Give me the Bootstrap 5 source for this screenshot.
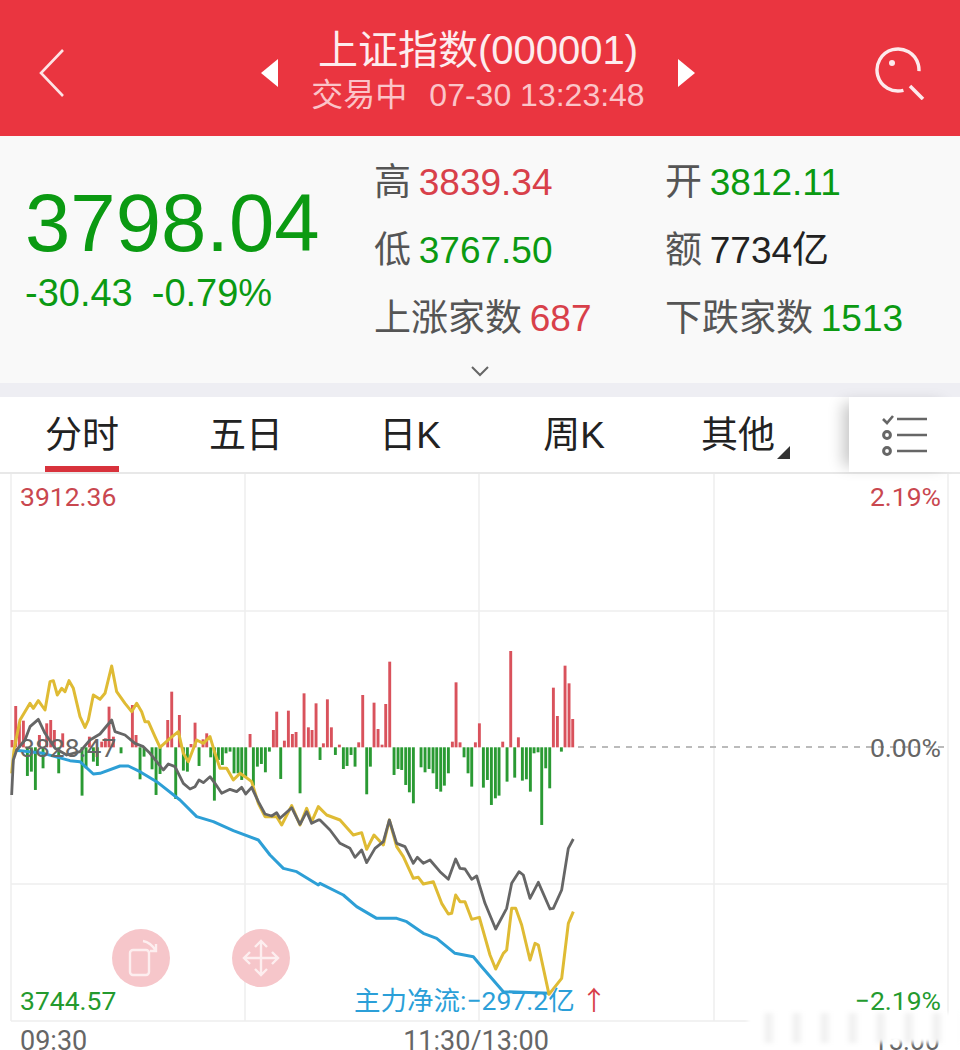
<!DOCTYPE html>
<html lang="zh-CN">
<head>
    <meta charset="UTF-8">
    <meta name="viewport" content="width=device-width, initial-scale=1.0">
    <title>上证指数</title>
    <link href="https://cdn.jsdelivr.net/npm/bootstrap@5.3.0/dist/css/bootstrap.min.css" rel="stylesheet">
    <style>
        body {
            width: 960px;
            height: 1050px;
            overflow: hidden;
            background: #fff;
            font-family: "Liberation Sans", "Noto Sans CJK SC", sans-serif;
        }
        .top-bar {
            height: 136px;
            background: #ea3540;
            color: #fff;
            padding: 0 34px 0 38px;
        }
        .top-icon { margin-top: 10px; }
        .top-title { font-size: 40px; line-height: 48px; margin-top: 6px; color: #fdecee; white-space: nowrap; }
        .top-sub { font-size: 32px; line-height: 42px; color: #fbc4c8; white-space: nowrap; }
        .top-sub span { margin-left: 22px; }
        .tri-left, .tri-right { width: 0; height: 0; margin-top: 10px; border-top: 14px solid transparent; border-bottom: 14px solid transparent; }
        .tri-left { border-right: 17px solid #fff; }
        .tri-right { border-left: 17px solid #fff; }
        .top-mid { gap: 33px; margin-left: 16px; }
        .quote-panel {
            height: 247px;
            background: #f9f9f9;
            position: relative;
        }
        .quote-left { width: 374px; padding: 44px 0 0 25px; }
        .price-big { font-size: 81.5px; line-height: 86px; color: #0b9a12; }
        .price-chg { font-size: 38px; line-height: 46px; color: #0b9a12; margin-top: 4px; white-space: nowrap; }
        .price-chg span { margin-left: 19px; }
        .stat-col { width: 291px; padding-top: 13px; }
        .stat-row { height: 68px; font-size: 37px; line-height: 68px; color: #555; white-space: nowrap; word-spacing: -2.5px; }
        .val-up { color: #d8404a; }
        .val-down { color: #0b9a12; }
        .val-plain { color: #222; }
        .more-arrow { position: absolute; left: 470px; top: 229px; }
        .gap-strip { height: 14px; background: #eeeef3; }
        .tab-row { height: 77px; border-bottom: 2px solid #e8e8e8; }
        .tab-item {
            width: 164px;
            font-size: 37px;
            color: #222;
            text-align: center;
            line-height: 78px;
            position: relative;
        }
        .tab-item.on::after {
            content: "";
            position: absolute;
            left: 45px;
            bottom: 0;
            width: 74px;
            height: 6px;
            background: #d8323c;
        }
        .tab-corner {
            position: absolute;
            right: 30px;
            bottom: 13px;
            border-left: 13px solid transparent;
            border-bottom: 13px solid #333;
        }
        .tab-tool {
            width: 111px;
            margin-left: auto;
            box-shadow: -12px 0 14px -6px rgba(0, 0, 0, .22);
            background: #fff;
            position: relative;
        }
        .chart-box { height: 548px; position: relative; }
        .chart-box svg { display: block; }
        .chart-lbl { position: absolute; font-size: 26.5px; line-height: 30px; font-family: Roboto, "Noto Sans CJK SC", sans-serif; white-space: nowrap; }
        .lbl-up { color: #c9474f; }
        .lbl-down { color: #249a2e; }
        .lbl-gray { color: #666; }
        .lbl-flow { color: #2b9fd8; }
        .lbl-arrow { color: #d8404a; margin-left: 6px; }
        .axis-row {
            height: 29px;
            font-family: Roboto, sans-serif;
            font-size: 27px;
            line-height: 38px;
            color: #666;
            padding: 0 20px;
            position: relative;
        }
        .wm-blur {
            position: absolute;
            left: 748px;
            top: -9px;
            width: 212px;
            height: 30px;
            background: repeating-linear-gradient(90deg, #fff 0 14px, #eee 20px, #fff 28px);
            filter: blur(2px);
        }
    </style>
</head>
<body>
    <div class="top-bar d-flex align-items-center justify-content-between">
        <svg class="top-icon" width="28" height="50" viewBox="0 0 28 50"><path d="M25 2 3 25l22 23" fill="none" stroke="#fde3e5" stroke-width="2.6"/></svg>
        <div class="top-mid d-flex align-items-center">
            <div class="tri-left"></div>
            <div class="text-center">
                <div class="top-title">上证指数(000001)</div>
                <div class="top-sub">交易中<span>07-30 13:23:48</span></div>
            </div>
            <div class="tri-right"></div>
        </div>
        <svg class="top-icon" width="52" height="54" viewBox="0 0 52 54"><circle cx="24" cy="24" r="21" fill="none" stroke="#fdeaec" stroke-width="3.4" stroke-dasharray="105 27" transform="rotate(75 24 24)"/><path d="m36 40 13 13" stroke="#fdeaec" stroke-width="3.6"/><circle cx="18" cy="17" r="3" fill="#fdeaec"/></svg>
    </div>

    <div class="quote-panel d-flex">
        <div class="quote-left">
            <div class="price-big">3798.04</div>
            <div class="price-chg">-30.43<span>-0.79%</span></div>
        </div>
        <div class="stat-col">
            <div class="stat-row">高 <span class="val-up">3839.34</span></div>
            <div class="stat-row">低 <span class="val-down">3767.50</span></div>
            <div class="stat-row">上涨家数 <span class="val-up">687</span></div>
        </div>
        <div class="stat-col">
            <div class="stat-row">开 <span class="val-down">3812.11</span></div>
            <div class="stat-row">额 <span class="val-plain">7734亿</span></div>
            <div class="stat-row">下跌家数 <span class="val-down">1513</span></div>
        </div>
        <svg class="more-arrow" width="20" height="12" viewBox="0 0 20 12"><path d="m2 2 8 8 8-8" fill="none" stroke="#666" stroke-width="2"/></svg>
    </div>
    <div class="gap-strip"></div>

    <div class="tab-row d-flex">
        <div class="tab-item on">分时</div>
        <div class="tab-item">五日</div>
        <div class="tab-item">日K</div>
        <div class="tab-item">周K</div>
        <div class="tab-item">其他<i class="tab-corner"></i></div>
        <div class="tab-tool d-flex align-items-center justify-content-center">
            <svg width="46" height="42" viewBox="0 0 46 42" fill="none" stroke="#666" stroke-width="2.6"><path d="m1 5 4 4 6-7M15 5h30M15 21h30M15 37h30"/><circle cx="5" cy="21" r="3.4" stroke-width="3"/><circle cx="5" cy="37" r="3.4" stroke-width="3"/></svg>
        </div>
    </div>

    <div class="chart-box">
        <svg id="chart" width="960" height="548" viewBox="0 474 960 548">
            <g stroke="#eee" stroke-width="1.5" fill="none">
                <path d="M11 474v547M245 474v547M479 474v547M714 474v547M948 474v547M11 611h937M11 884h937M11 1021h937"/>
            </g>
            <path d="M578 747h370" stroke="#bbb" stroke-width="2" stroke-dasharray="6 6"/>
            <g id="bars"></g>
            <polyline id="lineBlue" fill="none" stroke="#2d9fd6" stroke-width="3" stroke-linejoin="round"/>
            <polyline id="lineYellow" fill="none" stroke="#dfbb34" stroke-width="3" stroke-linejoin="round"/>
            <polyline id="lineGray" fill="none" stroke="#666" stroke-width="2.8" stroke-linejoin="round"/>
            <circle cx="141" cy="958" r="29" fill="#f6c6ca"/>
            <circle cx="261" cy="958" r="29" fill="#f6c6ca"/>
            <g fill="none" stroke="#fdeeef" stroke-width="2.4">
                <rect x="130" y="950" width="19" height="25" rx="3"/>
                <path d="M143 941c6 1 10 5 13 10M156 944v7h-6"/>
                <path d="M261 942v32M245 958h32M255 947l6-6 6 6M255 969l6 6 6-6M250 952l-6 6 6 6M272 952l6 6-6 6"/>
            </g>
        </svg>
        <div class="chart-lbl lbl-up" style="left:20px;top:8px">3912.36</div>
        <div class="chart-lbl lbl-up" style="right:19px;top:8px">2.19%</div>
        <div class="chart-lbl lbl-gray" style="left:20px;top:259px">3828.47</div>
        <div class="chart-lbl lbl-gray" style="right:19px;top:259px">0.00%</div>
        <div class="chart-lbl lbl-down" style="left:20px;top:512px">3744.57</div>
        <div class="chart-lbl lbl-down" style="right:19px;top:512px">−2.19%</div>
        <div class="chart-lbl lbl-flow" style="left:354px;top:512px">主力净流:−297.2亿<span class="lbl-arrow">↑</span></div>
    </div>

    <div class="axis-row d-flex justify-content-between">
        <span>09:30</span>
        <span class="me-2">11:30/13:00</span>
        <span>15:00</span>
        <div class="wm-blur"></div>
    </div>

    <script src="https://cdn.jsdelivr.net/npm/bootstrap@5.3.0/dist/js/bootstrap.bundle.min.js"></script>
    <script>
        // bar tips read off the chart: [x, y] at 3x scale, 322 is the zero line
        const barsLeft = [[36,300],[47,198],[58,250],[70,242],[82,408],[94,395],[106,450],[118,285],[129,385],[140,250],[152,240],[163,270],[176,400],[188,280],[246,467],[258,385],[268,290],[280,365],[292,378],[305,305],[316,295],[327,200],[340,290],[363,340],[397,195],[408,285],[420,418],[432,350],[456,388],[468,465],[480,402],[503,240],[515,155],[527,477],[538,225],[550,392],[562,395],[573,312],[585,248],[597,378],[609,298],[620,280],[632,352],[643,482],[655,360],[667,375],[678,340],[690,335],[702,400],[714,400],[725,420],[737,410],[750,282],[760,437],[772,380],[784,372],[796,397],[808,335],[820,270],[830,215],[842,417],[853,302],[865,212],[877,282],[888,276],[900,460],[912,160],[925,262],[936,270],[948,190]];
        const barsRight = [[0,360],[10,310],[22,178],[34,262],[46,345],[58,314],[70,387],[81,378],[93,345],[105,380],[116,307],[128,165],[140,463],[151,380],[162,188],[174,267],[186,314],[197,192],[209,65],[222,405],[234,387],[245,390],[257,435],[268,457],[280,490],[303,382],[315,397],[327,387],[339,400],[350,447],[362,455],[373,437],[385,400],[397,305],[408,127],[420,307],[432,352],[444,400],[455,440],[466,307],[478,250],[490,443],[502,420],[514,495],[526,475],[537,467],[548,305],[561,425],[572,33],[584,413],[595,292],[607,422],[619,418],[631,455],[642,340],[654,337],[665,555],[677,385],[689,445],[700,143],[712,228],[724,335],[735,77],[747,130],[758,237]];

        let barHtml = '';
        function addBars(list, offset) {
            list.forEach(([x, y]) => {
                const up = y < 322;
                const h = Math.abs(322 - y) / 3;
                const top = up ? 640 + y / 3 : 747.3;
                barHtml += `<rect x="${offset + x / 3 - 1.4}" y="${top}" width="2.9" height="${h}" fill="${up ? '#d9525c' : '#2a9a33'}"/>`;
            });
        }
        addBars(barsLeft, 0);
        addBars(barsRight, 320);
        document.getElementById('bars').innerHTML = barHtml;

        // lines in two parts: left part from y 640, right part from x 320 y 800
        function toPoints(left, right) {
            const a = left.map(([x, y]) => `${x / 3},${640 + y / 3}`);
            const b = right.map(([x, y]) => `${320 + x / 3},${800 + y / 3}`);
            return a.concat(b).join(' ');
        }
        document.getElementById('lineYellow').setAttribute('points', toPoints(
            [[35,400],[42,330],[60,240],[90,190],[100,205],[115,182],[135,210],[150,125],[160,122],[172,165],[185,145],[195,155],[207,122],[220,145],[240,230],[255,262],[265,240],[280,165],[300,178],[315,160],[335,78],[350,155],[375,190],[395,215],[410,190],[425,215],[435,245],[445,245],[465,290],[480,322],[510,295],[535,275],[550,340],[565,365],[590,300],[610,310],[630,290],[645,340],[660,385],[680,385],[700,420],[720,400],[735,410],[755,425],[775,490],[795,530],[830,530],[845,555],[875,497],[900,555],[920,505],[935,545],[955,500]],
            [[0,25],[20,45],[60,60],[100,105],[125,98],[140,148],[162,105],[190,135],[208,60],[230,140],[250,170],[280,235],[295,232],[310,252],[340,245],[365,310],[385,342],[395,340],[407,285],[420,305],[435,305],[455,358],[478,352],[510,465],[527,507],[550,460],[560,450],[575,325],[587,325],[605,375],[630,480],[645,430],[655,435],[687,583],[725,535],[745,370],[760,335]]
        ));
        document.getElementById('lineGray').setAttribute('points', toPoints(
            [[35,465],[40,360],[50,330],[75,300],[90,260],[115,238],[135,280],[165,325],[200,345],[240,335],[270,300],[300,282],[335,240],[345,275],[375,285],[405,310],[430,320],[450,340],[470,365],[490,390],[505,372],[525,380],[550,430],[570,447],[585,440],[597,420],[610,428],[630,410],[645,430],[665,460],[690,448],[710,455],[725,442],[737,462],[755,442],[775,485],[795,522],[815,528],[830,518],[840,535],[875,503],[900,553],[920,515],[935,550],[955,540]],
            [[0,60],[30,90],[60,130],[90,145],[105,172],[125,150],[140,188],[165,145],[190,125],[208,60],[230,130],[255,140],[280,190],[292,172],[310,190],[330,180],[360,215],[385,238],[407,177],[420,205],[435,207],[455,238],[470,228],[495,310],[527,387],[560,325],[575,250],[597,215],[610,225],[630,295],[655,247],[690,327],[700,325],[725,270],[745,145],[760,117]]
        ));
        document.getElementById('lineBlue').setAttribute('points', toPoints(
            [[40,330],[130,340],[185,355],[210,362],[240,365],[280,402],[300,400],[360,378],[385,378],[420,395],[470,425],[540,480],[590,530],[640,545],[700,572],[775,600],[810,645],[850,685],[890,695],[955,735]],
            [[0,250],[70,285],[110,320],[170,355],[230,355],[260,365],[310,400],[350,415],[405,460],[460,470],[485,500],[550,575],[690,580]]
        ));
    </script>
</body>
</html>
